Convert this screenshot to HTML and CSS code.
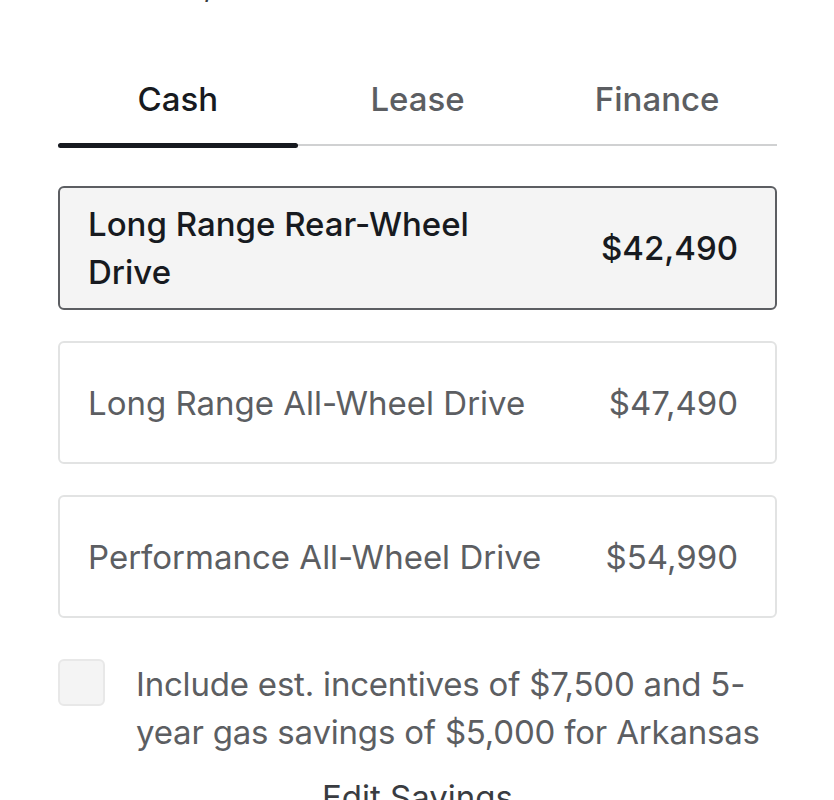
FILE: index.html
```html
<!DOCTYPE html>
<html lang="en">
<head>
<meta charset="utf-8">
<title>Payment options</title>
<link rel="stylesheet" href="styles.css">
</head>
<body>
<main class="page">
  <p class="lead">Arkansas, AR</p>
  <nav class="tabs">
    <button class="tab tab-active">Cash</button>
    <button class="tab">Lease</button>
    <button class="tab">Finance</button>
  </nav>
  <section class="options">
    <div class="option option-selected">
      <span class="option-name">Long Range Rear-Wheel Drive</span>
      <span class="option-price">$42,490</span>
    </div>
    <div class="option">
      <span class="option-name">Long Range All-Wheel Drive</span>
      <span class="option-price">$47,490</span>
    </div>
    <div class="option">
      <span class="option-name">Performance All-Wheel Drive</span>
      <span class="option-price">$54,990</span>
    </div>
  </section>
  <label class="incentive">
    <span class="checkbox"></span>
    <span class="incentive-text">Include est. incentives of $7,500 and 5-year gas savings of $5,000 for Arkansas</span>
  </label>
  <p class="edit">Edit Savings</p>
</main>
</body>
</html>
```
FILE: styles.css
```css
* { box-sizing: border-box; }
html, body { margin: 0; padding: 0; background: #ffffff; overflow: hidden; }
body {
  font-family: Inter, "Noto Sans", "Liberation Sans", sans-serif;
  font-size: 33px;
  line-height: 48px;
  color: #5c5e62;
}
.page {
  padding: 0 57px 0 58px;
}
.lead {
  margin: -40px 0 0 0;
  color: #393c41;
}
.tabs {
  display: flex;
  margin-top: 67px;
  border-bottom: 2px solid #d0d1d2;
}
.tab {
  flex: 1;
  position: relative;
  background: none;
  border: 0;
  padding: 0 0 21px 0;
  font: inherit;
  line-height: 48px;
  font-weight: 500;
  color: #5c5e62;
}
.tab-active { color: #171a20; }
.tab-active::after {
  content: "";
  position: absolute;
  left: 0;
  right: 0;
  bottom: -3.5px;
  height: 5px;
  border-radius: 3px;
  background: #171a20;
}
.options {
  display: flex;
  flex-direction: column;
  gap: 31px;
  margin-top: 40px;
}
.option {
  display: flex;
  align-items: center;
  justify-content: space-between;
  gap: 48px;
  min-height: 123px;
  padding: 12px 37px 12px 28px;
  border: 2px solid #e2e3e3;
  border-radius: 6px;
  background: #ffffff;
}
.option-selected {
  border-color: #5c5e62;
  background: #f4f4f4;
  color: #171a20;
  font-weight: 500;
}
.option-price { white-space: nowrap; }
.incentive {
  display: flex;
  align-items: flex-start;
  gap: 31px;
  margin-top: 41px;
}
.checkbox {
  flex: none;
  width: 47px;
  height: 47px;
  border: 2px solid #e8e8e8;
  border-radius: 6px;
  background: #f4f4f4;
}
.incentive-text { margin-top: 1px; letter-spacing: -0.2px; }
.edit {
  margin: 17px 0 0 0;
  text-align: center;
  color: #393c41;
}
```
